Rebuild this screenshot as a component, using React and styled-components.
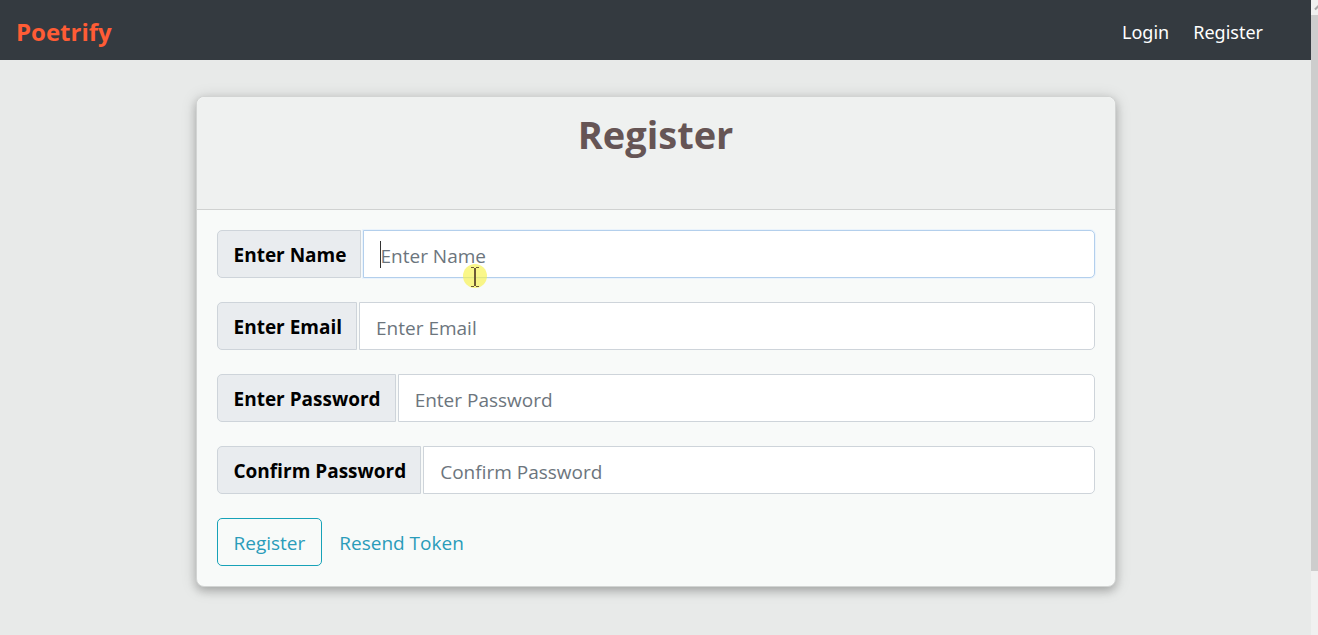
import React from 'react';
import styled, { createGlobalStyle, css } from 'styled-components';

const Global = createGlobalStyle`
  *, *::before, *::after { box-sizing: border-box; }
  body {
    margin: 0;
    background: #e8eae9;
    font-family: "Open Sans", "Noto Sans", sans-serif;
    font-size: 19px;
    line-height: 30px;
  }
`;

const Screen = styled.div`
  display: flex;
  min-height: 100vh;
`;

const Page = styled.div`
  flex: 1;
  min-width: 0;
`;

const Navbar = styled.nav`
  display: flex;
  align-items: center;
  justify-content: space-between;
  height: 60px;
  padding: 4px 48px 0 16px;
  background: #343a40;
`;

const Brand = styled.a`
  color: #ff5c35;
  font-size: 24px;
  font-weight: 700;
  text-decoration: none;
`;

const NavLinks = styled.div`
  display: flex;
  gap: 24px;
`;

const NavLink = styled.a`
  color: #fff;
  font-family: "Noto Sans", sans-serif;
  font-size: 18px;
  line-height: 28px;
  text-decoration: none;
`;

const Card = styled.main`
  width: calc(100% - 32px);
  max-width: 920px;
  margin: 36px auto 48px;
  border: 1px solid #d2d4d3;
  border-radius: 8px;
  background: #f8faf9;
  box-shadow: 0 4px 8px rgba(0, 0, 0, 0.2), 0 2px 16px rgba(0, 0, 0, 0.15);
`;

const CardHeader = styled.header`
  height: 113px;
  padding: 12px 20px;
  border-bottom: 1px solid #d0d2d1;
  border-radius: 8px 8px 0 0;
  background: #eff1f0;
  text-align: center;
`;

const Title = styled.h1`
  margin: 0;
  color: #665555;
  font-size: 38px;
  line-height: 50px;
  font-weight: 700;
`;

const Form = styled.form`
  display: flex;
  flex-direction: column;
  gap: 24px;
  padding: 20px;
`;

const Field = styled.div`
  display: flex;
  gap: 2px;
  height: 48px;
`;

const Label = styled.label`
  display: flex;
  align-items: center;
  padding: 2px 14px 0 16px;
  border: 1px solid #ced4da;
  border-radius: 5px 0 0 5px;
  background: #e9ecef;
  color: #000;
  font-weight: 700;
  white-space: nowrap;
`;

const InputBox = styled.div`
  position: relative;
  flex: 1;
  min-width: 0;
`;

const Input = styled.input`
  width: 100%;
  height: 48px;
  padding: 4px 16px 0;
  border: 1px solid #ced4da;
  border-radius: 0 5px 5px 0;
  background: #fff;
  color: #495057;
  font: inherit;
  outline: none;
  &::placeholder { color: #6c757d; opacity: 1; }
  ${(p) => p.$active && css`
    border-color: #b3cfec;
    box-shadow: 0 0 0 1px #eaf3fc;
  `}
`;

const Caret = styled.span`
  position: absolute;
  top: 11px;
  left: 17px;
  width: 1px;
  height: 27px;
  background: #333;
`;

const Pointer = styled.svg`
  position: absolute;
  top: 34px;
  left: 100px;
  width: 24px;
  height: 24px;
  pointer-events: none;
`;

const Actions = styled.div`
  display: flex;
  align-items: center;
  gap: 17px;
`;

const SubmitButton = styled.button`
  height: 48px;
  padding: 2px 16px 0;
  border: 1px solid #17a2b8;
  border-radius: 5px;
  background: transparent;
  color: #2a9cba;
  font: inherit;
`;

const TextLink = styled.a`
  padding-top: 2px;
  color: #2a9cba;
  text-decoration: none;
`;

const ScrollTrack = styled.div`
  display: flex;
  flex-direction: column;
  width: 7px;
  height: 100vh;
  overflow: hidden;
  background: #f0f0f0;
`;

const ScrollArrow = styled.svg`
  flex: none;
  width: 15px;
  height: 15px;
`;

const ScrollThumb = styled.div`
  height: 90%;
  margin-bottom: auto;
  max-height: calc(100% - 79px);
  background: #cdcdcd;
`;

const fields = [
  { id: 'name', text: 'Enter Name', type: 'text', active: true },
  { id: 'email', text: 'Enter Email', type: 'email' },
  { id: 'password', text: 'Enter Password', type: 'password' },
  { id: 'confirm', text: 'Confirm Password', type: 'password' },
];

export default function App() {
  return (
    <>
      <Global />
      <Screen>
        <Page>
          <Navbar>
            <Brand href="#">Poetrify</Brand>
            <NavLinks>
              <NavLink href="#login">Login</NavLink>
              <NavLink href="#register">Register</NavLink>
            </NavLinks>
          </Navbar>
          <Card>
            <CardHeader>
              <Title>Register</Title>
            </CardHeader>
            <Form onSubmit={(e) => e.preventDefault()}>
              {fields.map((f) => (
                <Field key={f.id}>
                  <Label htmlFor={f.id}>{f.text}</Label>
                  <InputBox>
                    <Input id={f.id} type={f.type} placeholder={f.text} $active={f.active} />
                    {f.active && (
                      <>
                        <Caret />
                        <Pointer viewBox="0 0 24 24" aria-hidden="true">
                          <circle cx="12" cy="12" r="12" fill="#f7f24a" fillOpacity="0.65" />
                          <path
                            d="M8 3.5h3M13 3.5h3M8 22.5h3M13 22.5h3"
                            fill="none"
                            stroke="#6d5a35"
                            strokeWidth="1"
                          />
                          <path d="M12 4v18" stroke="#6d5a35" strokeWidth="2" />
                        </Pointer>
                      </>
                    )}
                  </InputBox>
                </Field>
              ))}
              <Actions>
                <SubmitButton type="submit">Register</SubmitButton>
                <TextLink href="#resend">Resend Token</TextLink>
              </Actions>
            </Form>
          </Card>
        </Page>
        <ScrollTrack aria-hidden="true">
          <ScrollArrow viewBox="0 0 15 15">
            <path d="M4 9.5L7.5 6L11 9.5" fill="none" stroke="#a8a8a8" strokeWidth="2" />
          </ScrollArrow>
          <ScrollThumb />
        </ScrollTrack>
      </Screen>
    </>
  );
}
